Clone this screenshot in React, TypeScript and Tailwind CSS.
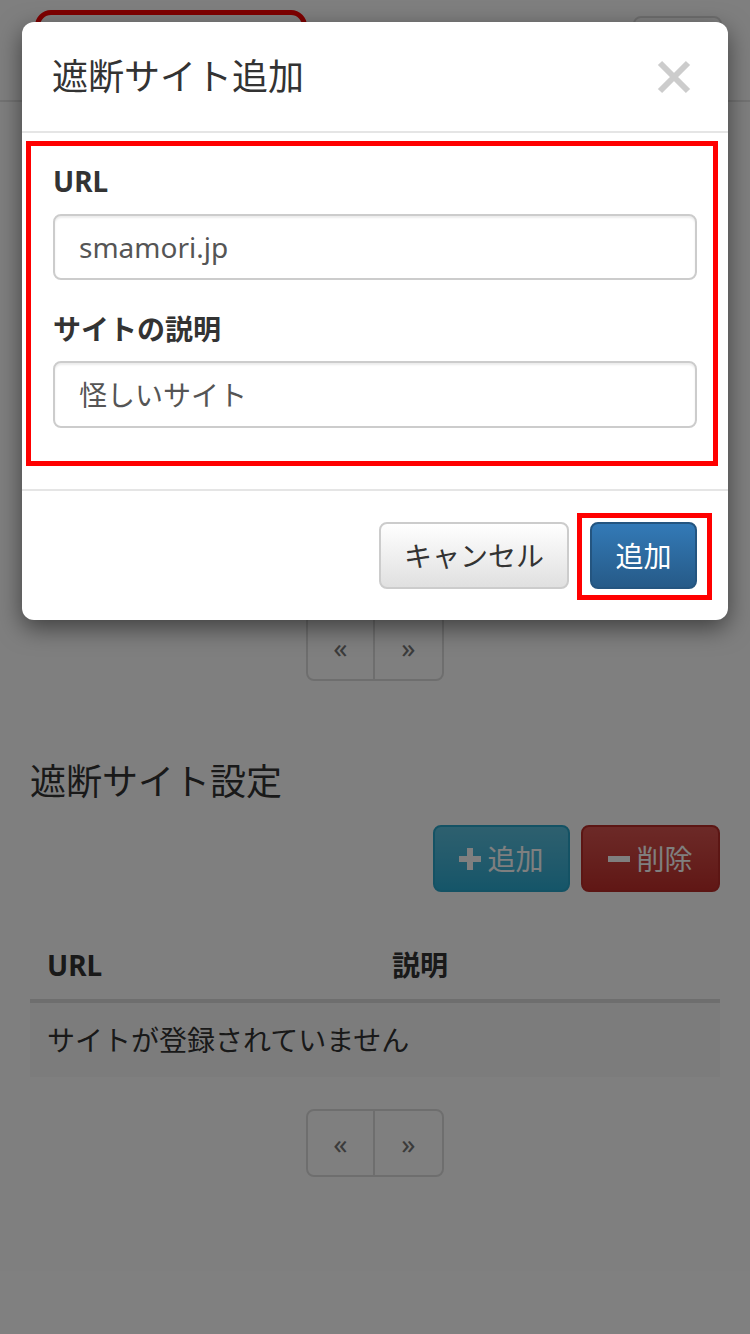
const font = "font-['Noto_Sans','Noto_Sans_CJK_JP',sans-serif]";

const Pager = () => (
  <div className="flex justify-center">
    <div className="flex rounded-[8px] border-2 border-[#dddddd] bg-white text-[#777777]">
      <span className="flex h-[64px] w-[67px] items-center justify-center border-r-2 border-[#dddddd] text-[28px] leading-none">«</span>
      <span className="flex h-[64px] w-[67px] items-center justify-center text-[28px] leading-none">»</span>
    </div>
  </div>
);

const BlockIcon = ({ minus }: { minus?: boolean }) => (
  <svg width="22" height="22" viewBox="0 0 22 22" className="mr-[6px]">
    <rect x="0" y="8" width="22" height="6" fill="currentColor" />
    {!minus && <rect x="8" y="0" width="6" height="22" fill="currentColor" />}
  </svg>
);

export default function App() {
  return (
    <div className={`relative h-[1334px] w-[750px] overflow-hidden bg-white text-[#333333] ${font}`}>
      {/* page behind the dialog */}
      <div className="flex h-[102px] items-start justify-between border-b-2 border-[#e7e7e7] pl-[35px] pr-[28px] pt-[10px]">
        <div className="h-[80px] w-[272px] rounded-[16px] border-[5px] border-[#ff0000]" />
        <div className="mt-[6px] h-[68px] w-[89px] rounded-[8px] border-2 border-[#dddddd]" />
      </div>

      <div className="px-[30px]">
        <div className="h-[511px]" />
        <Pager />

        <h2 className="mt-[77px] text-[36px] leading-[48px] font-normal">遮断サイト設定</h2>

        <div className="mt-[19px] flex justify-end gap-[11px]">
          <button className="flex h-[67px] w-[137px] items-center justify-center rounded-[8px] border-2 border-[#28a4c9] bg-gradient-to-b from-[#5bc0de] to-[#2aabd2] text-[28px] text-white">
            <BlockIcon />
            追加
          </button>
          <button className="flex h-[67px] w-[139px] items-center justify-center rounded-[8px] border-2 border-[#b92c28] bg-gradient-to-b from-[#d9534f] to-[#c12e2a] text-[28px] text-white">
            <BlockIcon minus />
            削除
          </button>
        </div>

        <table className="mt-[40px] w-full border-collapse text-[28px]">
          <thead>
            <tr className="border-b-4 border-[#dddddd]">
              <th className="w-1/2 px-[17px] py-[15px] text-left font-bold leading-[37px]">URL</th>
              <th className="w-1/2 px-[17px] py-[15px] text-left font-bold leading-[37px]">説明</th>
            </tr>
          </thead>
          <tbody>
            <tr className="bg-[#f9f9f9]">
              <td colSpan={2} className="px-[17px] py-[17px] leading-[40px]">サイトが登録されていません</td>
            </tr>
          </tbody>
        </table>

        <div className="mt-[32px]">
          <Pager />
        </div>
      </div>

      {/* overlay */}
      <div className="absolute inset-0 bg-black/50" />

      {/* dialog */}
      <div className="absolute left-[22px] top-[22px] w-[706px] rounded-[12px] bg-white shadow-[0_8px_24px_rgba(0,0,0,0.5)]">
        <div className="flex h-[111px] items-center justify-between border-b-2 border-[#e5e5e5] pl-[30px] pr-[37px]">
          <h1 className="text-[36px] leading-[48px] font-normal">遮断サイト追加</h1>
          <svg width="34" height="34" viewBox="0 0 34 34">
            <path d="M3 3 L31 31 M31 3 L3 31" stroke="#cccccc" strokeWidth="6" />
          </svg>
        </div>

        <div className="px-[31px] pt-[28px] pb-[61px] text-[28px]">
          <label className="block font-bold leading-[40px]">URL</label>
          <div className="mt-[13px] flex h-[66px] items-center rounded-[8px] border-2 border-[#cccccc] px-[24px] text-[#555555] shadow-[inset_0_2px_2px_rgba(0,0,0,0.075)]">
            smamori.jp
          </div>
          <label className="mt-[29px] block font-bold leading-[40px]">サイトの説明</label>
          <div className="mt-[12px] flex h-[67px] items-center rounded-[8px] border-2 border-[#cccccc] px-[24px] text-[#555555] shadow-[inset_0_2px_2px_rgba(0,0,0,0.075)]">
            怪しいサイト
          </div>
        </div>

        <div className="flex justify-end gap-[21px] border-t-2 border-[#e5e5e5] px-[31px] pt-[31px] pb-[31px] text-[28px]">
          <button className="h-[67px] w-[190px] rounded-[8px] border-2 border-[#cccccc] bg-gradient-to-b from-white to-[#e0e0e0] text-[#333333]">
            キャンセル
          </button>
          <button className="h-[67px] w-[107px] rounded-[8px] border-2 border-[#245580] bg-gradient-to-b from-[#337ab7] to-[#265a88] text-white">
            追加
          </button>
        </div>

        {/* red annotations */}
        <div className="absolute left-[4px] top-[119px] h-[325px] w-[692px] border-[5px] border-[#ff0000]" />
        <div className="absolute left-[555px] top-[491px] h-[87px] w-[135px] border-[5px] border-[#ff0000]" />
      </div>
    </div>
  );
}
